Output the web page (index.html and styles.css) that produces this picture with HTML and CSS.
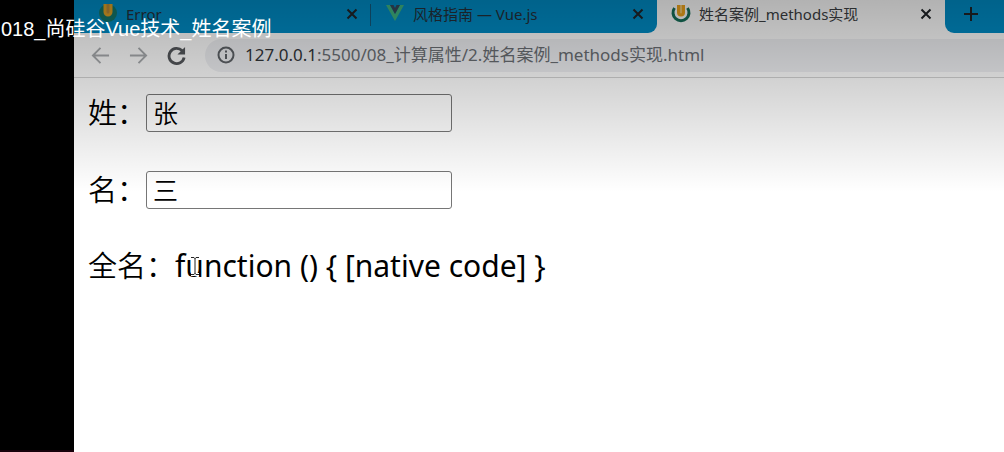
FILE: index.html
```html
<!DOCTYPE html>
<html lang="zh-CN">
<head>
<meta charset="utf-8">
<meta name="viewport" content="width=device-width, initial-scale=1">
<title>姓名案例_methods实现</title>
<link rel="stylesheet" href="styles.css">
</head>
<body>
<div class="player">
  <div class="rail"></div>
  <div class="browser">
    <nav class="tabs" aria-label="Tabs">
      <div class="tab-group">
        <div class="tab first">
          <svg class="favicon" viewBox="0 0 20 20" aria-hidden="true"><circle cx="10" cy="9" r="9" fill="#12786c"/><path d="M7 0v8a3 3 0 0 0 6 0V0" fill="#b98a3a" stroke="#e0a326" stroke-width="3"/></svg>
          <span class="tab-title">Error</span>
          <button class="icon-button close" aria-label="Close Error"><svg viewBox="0 0 12 12"><path d="M1.5 1.5l9 9m0-9l-9 9"/></svg></button>
        </div>
        <div class="tab">
          <svg class="favicon" viewBox="0 0 20 20" aria-hidden="true"><path d="M1 1h4l5 9 5-9h4L10 17z" fill="#41b883"/><path d="M5 1h3.500l1.500 3 1.500-3H15l-5 9z" fill="#35495e"/></svg>
          <span class="tab-title">风格指南 — Vue.js</span>
          <button class="icon-button close" aria-label="Close Vue.js"><svg viewBox="0 0 12 12"><path d="M1.500 1.500l9 9m0-9l-9 9"/></svg></button>
        </div>
      </div>
      <div class="tab active">
        <svg class="favicon" viewBox="0 0 20 20" aria-hidden="true"><path d="M3.500 4a8 8 0 1 0 13 0" fill="none" stroke="#16705a" stroke-width="3"/><path d="M7.500 1v7.500a2.500 2.500 0 0 0 5 0V1" fill="#f6c86a" stroke="#f0a51c" stroke-width="3"/></svg>
        <span class="tab-title">姓名案例_methods实现</span>
        <button class="icon-button close" aria-label="Close tab"><svg viewBox="0 0 12 12"><path d="M1.500 1.500l9 9m0-9l-9 9"/></svg></button>
      </div>
      <div class="tab-end">
        <button class="icon-button plus" aria-label="New tab"><svg viewBox="0 0 14 14"><path d="M7 0v14M0 7h14"/></svg></button>
      </div>
    </nav>
    <div class="toolbar">
      <button class="icon-button nav faded" aria-label="Back"><svg viewBox="0 0 20 20"><path d="M19 10H3M10 2l-8 8 8 8"/></svg></button>
      <button class="icon-button nav faded" aria-label="Forward"><svg viewBox="0 0 20 20"><path d="M1 10h16M10 2l8 8-8 8"/></svg></button>
      <button class="icon-button nav reload" aria-label="Reload"><svg viewBox="0 0 20 20"><path d="M16 5a8 8 0 1 0 2 7"/><path class="solid" d="M19 1v8h-8z"/></svg></button>
      <div class="address">
        <svg class="info" viewBox="0 0 18 18" aria-hidden="true"><circle cx="9" cy="9" r="7.500"/><path d="M9 8v5M9 4.500v2"/></svg>
        <span><span class="host">127.0.0.1</span>:5500/08_计算属性/2.姓名案例_methods实现.html</span>
      </div>
    </div>
    <main class="page">
      <div class="row"><label for="surname">姓：</label><input id="surname" type="text" value="张"></div>
      <div class="row"><label for="given">名：</label><input id="given" type="text" value="三"></div>
      <div class="row output"><span class="name">全名：</span><span class="result">function () { [native code] }<svg class="cursor" viewBox="0 0 10 20" aria-hidden="true"><path class="halo" d="M1 1.500h3l1 1 1-1h3M5 2v16M1 18.500h3l1-1 1 1h3"/><path d="M1 1.500h3l1 1 1-1h3M5 2v16M1 18.500h3l1-1 1 1h3"/></svg></span></div>
    </main>
  </div>
  <header class="caption"><h1>018_尚硅谷Vue技术_姓名案例</h1></header>
</div>
</body>
</html>
```

FILE: styles.css
```css
* { box-sizing: border-box; }

body {
  margin: 0;
  font-family: "Noto Sans", "Noto Sans CJK SC", sans-serif;
}

.player {
  position: relative;
  display: flex;
  min-height: 100vh;
  background: #fff;
}

.rail {
  flex: 0 0 74px;
  background: #000;
  border-bottom: 2px solid #16000a;
}

.browser {
  flex: 1;
  min-width: 0;
}

.icon-button {
  display: flex;
  padding: 0;
  border: 0;
  background: none;
}

.icon-button svg {
  width: 100%;
  height: 100%;
  fill: none;
  stroke: #202428;
  stroke-width: 2;
}

.tabs {
  display: flex;
  height: 33px;
  background: #fff;
  font-size: 15px;
  line-height: 20px;
  color: #24303a;
}

.tab-group {
  display: flex;
  background: #008dc7;
  border-bottom-right-radius: 9px;
}

.tab {
  display: flex;
  align-items: center;
  width: 286px;
  padding: 0 13px 5px 14px;
  white-space: nowrap;
}

.tab.first {
  width: 297px;
  padding-left: 24px;
  background: linear-gradient(#14597d, #14597d) right 4px / 1px 22px no-repeat;
}

.tab.active {
  width: 288px;
  color: #3c4043;
}

.favicon {
  width: 20px;
  height: 20px;
  margin-right: 8px;
}

.tab-title {
  flex: 1;
}

.close {
  width: 12px;
  height: 12px;
}

.tab-end {
  flex: 1;
  padding: 7px 19px;
  background: #008dc7;
  border-bottom-left-radius: 9px;
}

.plus {
  width: 14px;
  height: 14px;
}

.toolbar {
  display: flex;
  align-items: center;
  height: 45px;
  padding-left: 17px;
  gap: 19px;
  background: #fff;
  border-bottom: 1px solid #d4d4d4;
}

.nav {
  width: 19px;
  height: 19px;
}

.faded svg {
  stroke: #a9acaf;
}

.reload svg {
  stroke: #55585c;
  stroke-width: 3;
}

.reload .solid {
  fill: #55585c;
  stroke: none;
}

.address {
  flex: 1;
  display: flex;
  align-items: center;
  gap: 10px;
  min-width: 0;
  height: 33px;
  padding-left: 12px;
  background: #f0f1f4;
  border-radius: 17px 0 0 17px;
  font-size: 17px;
  line-height: 24px;
  white-space: nowrap;
  color: #6b6f74;
}

.host {
  color: #33363a;
}

.info {
  width: 18px;
  height: 18px;
  fill: none;
  stroke: #5f6368;
  stroke-width: 2;
}

.page {
  display: flex;
  flex-direction: column;
  gap: 39px;
  padding: 16px 14px;
  font-size: 29px;
  line-height: 38px;
}

.row {
  display: flex;
  align-items: center;
}

.row label,
.row input,
.row .name {
  font-family: "Noto Sans", "Noto Sans CJK SC DemiLight", "Noto Sans CJK SC", sans-serif;
  font-weight: 350;
}

.row input {
  width: 306px;
  height: 38px;
  padding: 0 6px 2px;
  border: 1px solid #767676;
  border-radius: 3px;
  background: #fff;
  font-size: 25px;
}

.output {
  line-height: 36px;
}

.result {
  position: relative;
  font-size: 30px;
}

.cursor {
  position: absolute;
  left: 15px;
  top: 8px;
  width: 10px;
  height: 20px;
  fill: none;
  stroke: #222;
}

.cursor .halo {
  stroke: #fff;
  stroke-width: 3;
}

.caption {
  position: absolute;
  top: 0;
  left: 0;
  right: 0;
  height: 192px;
  padding: 17px 1px;
  background: linear-gradient(rgba(0, 0, 0, .3), rgba(0, 0, 0, 0));
  pointer-events: none;
}

.caption h1 {
  margin: 0;
  font: 20px/24px "Liberation Sans", "Noto Sans CJK SC", sans-serif;
  color: #fff;
}
```
